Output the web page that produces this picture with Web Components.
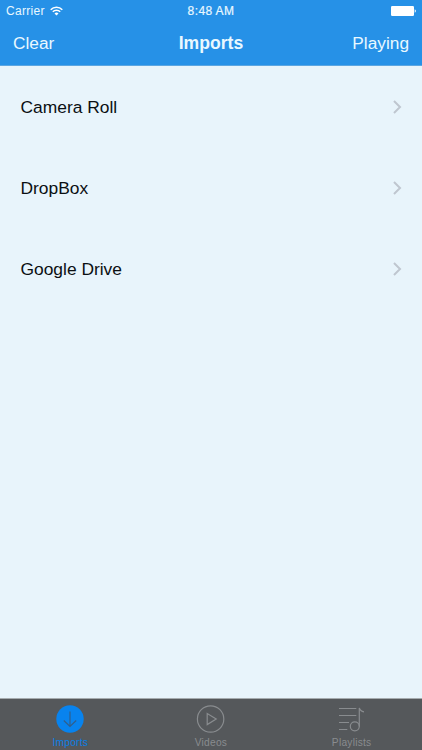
<!DOCTYPE html>
<html lang="en">
<head>
<meta charset="utf-8">
<meta name="viewport" content="width=device-width, initial-scale=1">
<title>Imports</title>
<style>
    html, body {
        margin: 0;
        height: 100%;
    }
    body {
        font-family: "Liberation Sans", Arial, sans-serif;
        overflow: hidden;
    }
</style>
</head>
<body>
<app-screen>
    <status-bar slot="header" carrier="Carrier" time="8:48 AM"></status-bar>
    <nav-bar slot="header">
        <span slot="left">Clear</span>
        <span slot="title">Imports</span>
        <span slot="right">Playing</span>
    </nav-bar>
    <import-row>Camera Roll</import-row>
    <import-row>DropBox</import-row>
    <import-row>Google Drive</import-row>
    <tab-bar slot="footer">
        <tab-item icon="imports" active>Imports</tab-item>
        <tab-item icon="videos">Videos</tab-item>
        <tab-item icon="playlists">Playlists</tab-item>
    </tab-bar>
</app-screen>

<script>
class AppScreen extends HTMLElement {
    constructor() {
        super();
        this.attachShadow({mode: 'open'}).innerHTML = `
            <style>
                :host {
                    display: flex;
                    flex-direction: column;
                    height: 100vh;
                    background-color: #e8f4fb;
                }
                header {
                    background-color: #2691e7;
                    border-bottom: 1px solid #5ba6e2;
                    height: 65px;
                }
                main {
                    flex: 1;
                    min-height: 0;
                }
            </style>
            <header><slot name="header"></slot></header>
            <main><slot></slot></main>
            <slot name="footer"></slot>
        `;
    }
}
customElements.define('app-screen', AppScreen);

class StatusBar extends HTMLElement {
    constructor() {
        super();
        this.attachShadow({mode: 'open'});
    }

    connectedCallback() {
        this.shadowRoot.innerHTML = `
            <style>
                :host {
                    display: grid;
                    grid-template-columns: 1fr auto 1fr;
                    align-items: center;
                    height: 22px;
                    padding: 0 6px;
                    box-sizing: border-box;
                    color: #e9f8ff;
                    font-size: 12px;
                    line-height: 22px;
                }
                .carrier {
                    display: flex;
                    align-items: center;
                    gap: 5px;
                    letter-spacing: 0.3px;
                }
                .time {
                    font-size: 12px;
                    letter-spacing: 0.4px;
                    -webkit-text-stroke: 0.2px currentColor;
                }
                .battery {
                    justify-self: end;
                }
                svg {
                    display: block;
                }
            </style>
            <div class="carrier">
                <span>${this.getAttribute('carrier')}</span>
                <svg width="13" height="10" viewBox="0 0 13 10" fill="none" stroke="#fff" stroke-width="1.6">
                    <path d="M.7 3.7a8.2 8.2 0 0 1 11.6 0M2.8 5.8a5.2 5.2 0 0 1 7.4 0"/>
                    <path d="M4.5 7.4a2.8 2.8 0 0 1 4 0l-2 2z" fill="#fff" stroke="none"/>
                </svg>
            </div>
            <div class="time">${this.getAttribute('time')}</div>
            <svg class="battery" width="25" height="10" viewBox="0 0 25 10" fill="#fff">
                <rect x="0" y="0" width="23" height="10" rx="1.2"/>
                <path d="M23.7 3.3q1.2.5 1.2 1.7t-1.2 1.7z"/>
            </svg>
        `;
    }
}
customElements.define('status-bar', StatusBar);

class NavBar extends HTMLElement {
    constructor() {
        super();
        this.attachShadow({mode: 'open'}).innerHTML = `
            <style>
                :host {
                    display: grid;
                    grid-template-columns: 1fr auto 1fr;
                    height: 43px;
                    padding: 0 13px;
                    color: #e9f8ff;
                    font-size: 17.3px;
                    line-height: 43px;
                }
                .title {
                    font-size: 17.6px;
                    font-weight: bold;
                }
                .right {
                    text-align: right;
                }
            </style>
            <div class="left"><slot name="left"></slot></div>
            <div class="title"><slot name="title"></slot></div>
            <div class="right"><slot name="right"></slot></div>
        `;
    }
}
customElements.define('nav-bar', NavBar);

class ImportRow extends HTMLElement {
    constructor() {
        super();
        this.attachShadow({mode: 'open'}).innerHTML = `
            <style>
                :host {
                    display: flex;
                    align-items: center;
                    justify-content: space-between;
                    height: 81.4px;
                    padding: 0 20px 0 20.5px;
                    color: #0b0f12;
                    font-size: 17.4px;
                }
                span {
                    padding-top: 1px;
                }
                svg {
                    display: block;
                }
            </style>
            <span><slot></slot></span>
            <svg width="10" height="16" viewBox="0 0 10 16" fill="none" stroke="#bfc6cf" stroke-width="2">
                <path d="M2 2l6 6-6 6"/>
            </svg>
        `;
    }
}
customElements.define('import-row', ImportRow);

class TabBar extends HTMLElement {
    constructor() {
        super();
        this.attachShadow({mode: 'open'}).innerHTML = `
            <style>
                :host {
                    display: grid;
                    grid-template-columns: repeat(3, 1fr);
                    height: 51px;
                    border-top: 1px solid #a5abae;
                    background-color: #55585b;
                }
            </style>
            <slot></slot>
        `;
    }
}
customElements.define('tab-bar', TabBar);

const ICONS = {
    imports: `
        <circle cx="15" cy="15" r="13.7" fill="#0883ee" stroke="none"/>
        <path d="M15 7.5v15M8.8 16.5l6.2 6 6.2-6" stroke="#315f8c"/>`,
    videos: `
        <circle cx="14.6" cy="15" r="13.2"/>
        <path d="M11.2 9.6v11l9-5.5z"/>`,
    playlists: `
        <path d="M2 4.5h17.3M2 11.5h17.3M2 18.5h10M2 25.5h8.3"/>
        <circle cx="17.8" cy="22.3" r="4.5"/>
        <path d="M22.3 22.5V4c.6 2.1 2.2 3.4 4.7 3.8"/>`
};

class TabItem extends HTMLElement {
    constructor() {
        super();
        this.attachShadow({mode: 'open'});
    }

    connectedCallback() {
        this.shadowRoot.innerHTML = `
            <style>
                :host {
                    display: flex;
                    flex-direction: column;
                    align-items: center;
                    padding-top: 5px;
                    color: #898c8f;
                    font-size: 10.2px;
                    letter-spacing: 0.25px;
                    line-height: 12px;
                }
                :host([active]) {
                    color: #087fe5;
                }
                svg {
                    display: block;
                    margin-bottom: 3px;
                }
            </style>
            <svg width="30" height="30" viewBox="0 0 30 30" fill="none" stroke="currentColor" stroke-width="1.2">
                ${ICONS[this.getAttribute('icon')]}
            </svg>
            <span><slot></slot></span>
        `;
    }
}
customElements.define('tab-item', TabItem);
</script>
</body>
</html>
